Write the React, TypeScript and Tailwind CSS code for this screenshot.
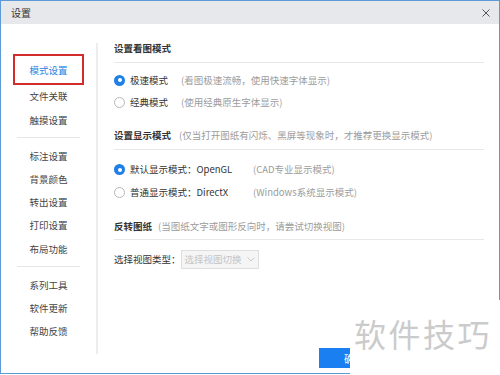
import React from "react";

const font = { fontFamily: '"Microsoft YaHei","Noto Sans CJK SC","Noto Sans",sans-serif' };

function Radio({ checked }: { checked?: boolean }) {
  return checked ? (
    <span className="w-[11px] h-[11px] rounded-full bg-[#1f7fe6] flex items-center justify-center shrink-0">
      <span className="w-[4px] h-[4px] rounded-full bg-white" />
    </span>
  ) : (
    <span className="w-[11px] h-[11px] rounded-full border border-[#b8b8b8] bg-white shrink-0" />
  );
}

function SideItem({ label }: { label: string }) {
  return (
    <div className="h-[23.2px] flex items-center justify-center">
      <span className="text-[#444]">{label}</span>
    </div>
  );
}

function Sep() {
  return <div className="mx-[16px] my-[6px] h-px bg-[#e6e6e6]" />;
}

export default function App() {
  return (
    <div className="w-[500px] h-[375px] bg-white text-[9.5px] relative overflow-hidden" style={font}>
      <div className="w-full h-[374px] border border-[#5b9ad4] flex flex-col">
        <div className="h-[23px] bg-[#e6e8eb] flex items-center justify-between pl-[10px] pr-[9px] shrink-0">
          <span className="text-[10px] text-[#333]">设置</span>
          <svg width="8" height="8" viewBox="0 0 8 8" className="text-[#555]">
            <path d="M0.5 0.5L7.5 7.5M7.5 0.5L0.5 7.5" stroke="currentColor" strokeWidth="1" />
          </svg>
        </div>
        <div className="flex flex-1 min-h-0">
          <div className="w-[97px] shrink-0 pt-[19px] pb-[19px] flex">
            <div className="flex-1 flex flex-col pt-[11px]">
              <div className="mx-[12px] h-[31px] border-2 border-[#d42b2b] flex items-center justify-center pt-[2px]">
                <span className="text-[#2a82e4]">模式设置</span>
              </div>
              <SideItem label="文件关联" />
              <SideItem label="触摸设置" />
              <Sep />
              <SideItem label="标注设置" />
              <SideItem label="背景颜色" />
              <SideItem label="转出设置" />
              <SideItem label="打印设置" />
              <SideItem label="布局功能" />
              <Sep />
              <SideItem label="系列工具" />
              <SideItem label="软件更新" />
              <SideItem label="帮助反馈" />
            </div>
            <div className="w-[2px] bg-[#ededed]" />
          </div>
          <div className="flex-1 pl-[16px] pr-[15px] pt-[16px] flex flex-col">
            <div className="text-[#333] font-bold h-[16px] flex items-center">设置看图模式</div>
            <div className="h-px bg-[#e8e8e8] mt-[6px] mb-[6px]" />
            <div className="flex items-center h-[22px] gap-[5px]">
              <Radio checked />
              <span className="text-[#333] w-[46px]">极速模式</span>
              <span className="text-[#9c9c9c]">(看图极速流畅，使用快速字体显示)</span>
            </div>
            <div className="flex items-center h-[22px] gap-[5px]">
              <Radio />
              <span className="text-[#333] w-[46px]">经典模式</span>
              <span className="text-[#9c9c9c]">(使用经典原生字体显示)</span>
            </div>
            <div className="h-[16px] mt-[14px] flex items-center gap-[8px]">
              <span className="text-[#333] font-bold">设置显示模式</span>
              <span className="text-[#9c9c9c]">(仅当打开图纸有闪烁、黑屏等现象时，才推荐更换显示模式)</span>
            </div>
            <div className="h-px bg-[#e8e8e8] mt-[6px] mb-[8px]" />
            <div className="flex items-center h-[23px] gap-[5px]">
              <Radio checked />
              <span className="text-[#333] w-[118px]">默认显示模式：OpenGL</span>
              <span className="text-[#9c9c9c]">(CAD专业显示模式)</span>
            </div>
            <div className="flex items-center h-[23px] gap-[5px]">
              <Radio />
              <span className="text-[#333] w-[118px]">普通显示模式：DirectX</span>
              <span className="text-[#9c9c9c]">(Windows系统显示模式)</span>
            </div>
            <div className="h-[16px] mt-[14px] flex items-center gap-[6px]">
              <span className="text-[#333] font-bold">反转图纸</span>
              <span className="text-[#9c9c9c]">(当图纸文字或图形反向时，请尝试切换视图)</span>
            </div>
            <div className="h-px bg-[#e8e8e8] mt-[5px] mb-[10px]" />
            <div className="flex items-center h-[19px]">
              <span className="text-[#333] whitespace-nowrap shrink-0">选择视图类型：</span>
              <div className="w-[78px] h-[19px] border border-[#dedede] bg-[#f5f5f5] flex items-center justify-between pl-[3px] pr-[3px] shrink-0">
                <span className="text-[#c4c4c4] whitespace-nowrap">选择视图切换</span>
                <svg width="8" height="5" viewBox="0 0 8 5">
                  <path d="M0.5 0.5L4 4L7.5 0.5" stroke="#cacaca" fill="none" />
                </svg>
              </div>
            </div>
            <div className="flex-1" />
            <div className="flex pb-[5px] pl-[205px]">
              <div className="w-[70px] h-[20px] bg-[#1a7ff0] flex items-center justify-center text-white text-[10px]">确定</div>
            </div>
          </div>
        </div>
      </div>
      <div className="absolute right-0 bottom-0 w-[150px] h-[75px] bg-white pt-[17px] pl-[4px]">
        <span
          className="block text-[32px] text-[#cbcbcb] leading-none tracking-[2.5px] whitespace-nowrap"
          style={{ fontFamily: '"Noto Sans CJK SC",sans-serif' }}
        >
          软件技巧
        </span>
      </div>
    </div>
  );
}
